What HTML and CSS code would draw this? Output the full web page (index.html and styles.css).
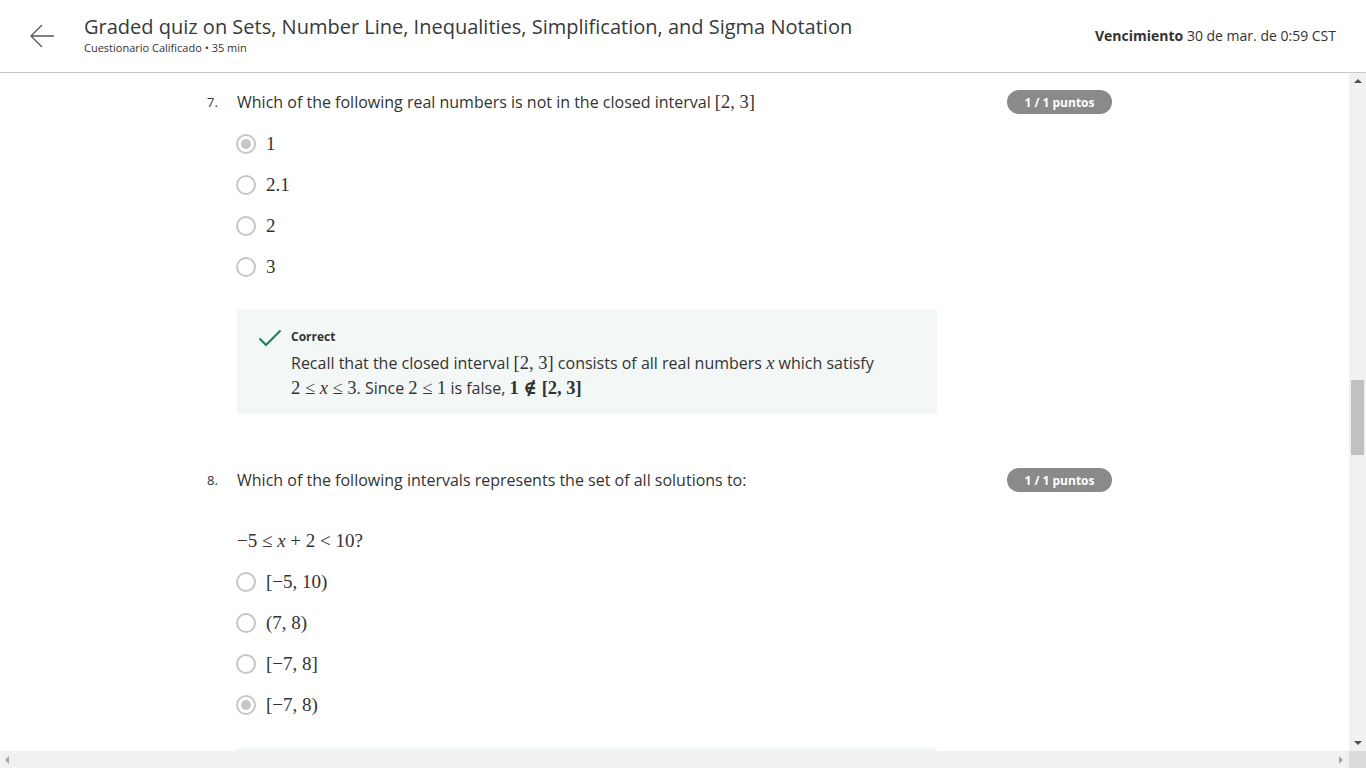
FILE: index.html
```html
<!DOCTYPE html>
<html lang="es">
<head>
<meta charset="utf-8">
<title>Graded quiz</title>
<link rel="stylesheet" href="styles.css">
</head>
<body>
<div class="app">
  <header class="topbar">
    <div class="back">
      <svg width="26" height="24" viewBox="0 0 26 24"><path d="M13 1 L2 12 L13 23 M2 12 H25" fill="none" stroke="#555" stroke-width="1.3"/></svg>
    </div>
    <div class="titles">
      <div class="title">Graded quiz on Sets, Number Line, Inequalities, Simplification, and Sigma Notation</div>
      <div class="subtitle">Cuestionario Calificado • 35 min</div>
    </div>
    <div class="due"><b>Vencimiento</b> 30 de mar. de 0:59 CST</div>
  </header>
  <div class="main">
    <div class="content">
      <div class="quiz">
        <section class="question q7">
          <div class="qrow">
            <span class="qnum">7.</span>
            <span class="qtext">Which of the following real numbers is not in the closed interval <span class="m">[2, 3]</span></span>
            <span class="badge">1 / 1 puntos</span>
          </div>
          <ul class="options">
            <li><span class="radio on"></span><span class="m">1</span></li>
            <li><span class="radio"></span><span class="m">2.1</span></li>
            <li><span class="radio"></span><span class="m">2</span></li>
            <li><span class="radio"></span><span class="m">3</span></li>
          </ul>
          <div class="feedback">
            <svg class="check" width="24" height="18" viewBox="0 0 24 18"><path d="M1.5 9.5 L8 16 L22.5 1.5" fill="none" stroke="#1f8354" stroke-width="2.2"/></svg>
            <div class="fbody">
              <div class="ok">Correct</div>
              <p>Recall that the closed interval <span class="m">[2, 3]</span> consists of all real numbers <span class="m"><i>x</i></span> which satisfy<br><span class="m">2 ≤ <i>x</i> ≤ 3</span>. Since <span class="m">2 ≤ 1</span> is false, <span class="m bold">1 ∉ [2, 3]</span></p>
            </div>
          </div>
        </section>
        <section class="question q8">
          <div class="qrow">
            <span class="qnum">8.</span>
            <span class="qtext">Which of the following intervals represents the set of all solutions to:</span>
            <span class="badge">1 / 1 puntos</span>
          </div>
          <div class="mline"><span class="m">−5 ≤ <i>x</i> + 2 &lt; 10?</span></div>
          <ul class="options">
            <li><span class="radio"></span><span class="m">[−5, 10)</span></li>
            <li><span class="radio"></span><span class="m">(7, 8)</span></li>
            <li><span class="radio"></span><span class="m">[−7, 8]</span></li>
            <li><span class="radio on"></span><span class="m">[−7, 8)</span></li>
          </ul>
          <div class="feedback stub"></div>
        </section>
      </div>
    </div>
    <div class="vscroll">
      <span class="arr up"></span>
      <div class="vtrack"><div class="vthumb"></div></div>
      <span class="arr down"></span>
    </div>
  </div>
  <div class="hscroll">
    <div class="htrack"><span class="arr left"></span><span class="arr right"></span></div>
    <div class="corner"></div>
  </div>
</div>
</body>
</html>
```
FILE: styles.css
```css
* { box-sizing: border-box; }
html, body { margin: 0; padding: 0; }
body { font-family: "Open Sans", "Noto Sans", sans-serif; color: #333; background: #fff; }
.app { width: 1366px; height: 768px; display: flex; flex-direction: column; overflow: hidden; }

.topbar { height: 73px; flex: none; display: flex; align-items: flex-start; border-bottom: 1px solid #c8c8c8; padding: 0 30px 0 29px; }
.back { width: 26px; height: 24px; margin-top: 24px; margin-right: 29px; }
.back svg { display: block; }
.titles { flex: 1; padding-top: 13px; }
.title { font-size: 20px; line-height: 28px; color: #373a3c; }
.subtitle { font-size: 11px; line-height: 14px; color: #333; }
.due { font-size: 14px; line-height: 20px; color: #333; padding-top: 26px; }
.due b { font-weight: 700; }

.main { flex: 1; display: flex; min-height: 0; }
.content { flex: 1; overflow: hidden; }
.quiz { width: 1112px; padding-left: 207px; padding-top: 17px; }

.question { display: flex; flex-direction: column; }
.q8 { margin-top: 54px; }
.qrow { display: flex; align-items: center; height: 24px; }
.qnum { width: 30px; font-size: 13px; color: #333; flex: none; }
.qtext { flex: 1; font-size: 16px; line-height: 24px; color: #333; }
.badge { flex: none; width: 105px; height: 24px; border-radius: 12px; background: #8a8a8a; color: #fff; font-size: 12px; font-weight: 700; display: flex; align-items: center; justify-content: center; }

.m { font-family: "Liberation Serif", "DejaVu Serif", serif; font-size: 19px; line-height: 1; }
.m i { font-style: italic; }
.m.bold { font-weight: 700; }
.qtext .m, .feedback .m { font-size: 18.5px; }

.options { list-style: none; margin: 9px 0 0 30px; padding: 0; }
.options li { height: 41px; display: flex; align-items: center; }
.options .m { font-size: 19px; color: #333; }
.radio { width: 20px; height: 20px; border: 2px solid #c6c6c6; border-radius: 50%; margin-left: -1px; margin-right: 10px; flex: none; display: flex; align-items: center; justify-content: center; }
.radio.on::after { content: ""; width: 10px; height: 10px; border-radius: 50%; background: #c6c6c6; }

.mline { margin: 36px 0 0 30px; height: 24px; display: flex; align-items: center; color: #333; }
.mline + .options { margin-top: 9px; }

.feedback { margin: 22px 0 0 30px; width: 700px; background: #f3f8f6; display: flex; padding: 19px 20px 13px 21px; }
.check { flex: none; margin-top: 1px; margin-right: 9px; }
.fbody { flex: 1; }
.ok { font-size: 12px; line-height: 18px; font-weight: 700; color: #333; }
.feedback p { margin: 5px 0 0; font-size: 16px; line-height: 25px; color: #333; }
.feedback.stub { height: 40px; padding: 0; margin-top: 23px; }

.vscroll { width: 17px; flex: none; background: #f1f1f1; display: flex; flex-direction: column; align-items: center; }
.vtrack { flex: 1; width: 100%; position: relative; }
.vthumb { position: absolute; left: 2px; right: 2px; top: 290px; height: 75px; background: #c1c1c1; }
.arr { width: 0; height: 0; display: block; }
.arr.up { border-left: 4px solid transparent; border-right: 4px solid transparent; border-bottom: 4px solid #505050; margin: 6px 0 7px; }
.arr.down { border-left: 4px solid transparent; border-right: 4px solid transparent; border-top: 4px solid #505050; margin: 7px 0 6px; }

.hscroll { height: 17px; flex: none; display: flex; }
.htrack { flex: 1; background: #f1f1f1; display: flex; align-items: center; justify-content: space-between; padding: 0 6px 0 5px; }
.arr.left { border-top: 4px solid transparent; border-bottom: 4px solid transparent; border-right: 4px solid #a3a3a3; }
.arr.right { border-top: 4px solid transparent; border-bottom: 4px solid transparent; border-left: 4px solid #a3a3a3; }
.corner { width: 17px; background: #dcdcdc; }
```
